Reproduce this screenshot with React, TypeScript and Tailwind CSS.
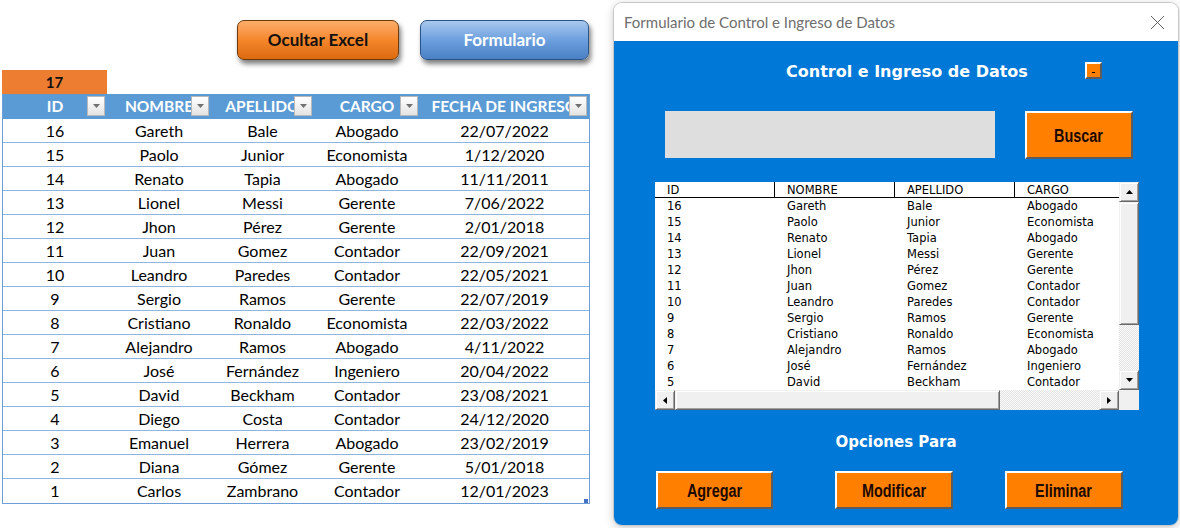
import React from 'react';

type Row = { id: number; nombre: string; apellido: string; cargo: string; fecha: string };

const rows: Row[] = [
  { id: 16, nombre: 'Gareth', apellido: 'Bale', cargo: 'Abogado', fecha: '22/07/2022' },
  { id: 15, nombre: 'Paolo', apellido: 'Junior', cargo: 'Economista', fecha: '1/12/2020' },
  { id: 14, nombre: 'Renato', apellido: 'Tapia', cargo: 'Abogado', fecha: '11/11/2011' },
  { id: 13, nombre: 'Lionel', apellido: 'Messi', cargo: 'Gerente', fecha: '7/06/2022' },
  { id: 12, nombre: 'Jhon', apellido: 'Pérez', cargo: 'Gerente', fecha: '2/01/2018' },
  { id: 11, nombre: 'Juan', apellido: 'Gomez', cargo: 'Contador', fecha: '22/09/2021' },
  { id: 10, nombre: 'Leandro', apellido: 'Paredes', cargo: 'Contador', fecha: '22/05/2021' },
  { id: 9, nombre: 'Sergio', apellido: 'Ramos', cargo: 'Gerente', fecha: '22/07/2019' },
  { id: 8, nombre: 'Cristiano', apellido: 'Ronaldo', cargo: 'Economista', fecha: '22/03/2022' },
  { id: 7, nombre: 'Alejandro', apellido: 'Ramos', cargo: 'Abogado', fecha: '4/11/2022' },
  { id: 6, nombre: 'José', apellido: 'Fernández', cargo: 'Ingeniero', fecha: '20/04/2022' },
  { id: 5, nombre: 'David', apellido: 'Beckham', cargo: 'Contador', fecha: '23/08/2021' },
  { id: 4, nombre: 'Diego', apellido: 'Costa', cargo: 'Contador', fecha: '24/12/2020' },
  { id: 3, nombre: 'Emanuel', apellido: 'Herrera', cargo: 'Abogado', fecha: '23/02/2019' },
  { id: 2, nombre: 'Diana', apellido: 'Gómez', cargo: 'Gerente', fecha: '5/01/2018' },
  { id: 1, nombre: 'Carlos', apellido: 'Zambrano', cargo: 'Contador', fecha: '12/01/2023' },
];

const headers = ['ID', 'NOMBRE', 'APELLIDO', 'CARGO', 'FECHA DE INGRESO'];

function FilterBtn() {
  return (
    <span className="absolute right-[2px] top-[2px] flex h-[20px] w-[18px] items-center justify-center border border-[#b9b9b9] bg-gradient-to-b from-white to-[#e4e4e4]">
      <svg width="7" height="4" viewBox="0 0 7 4">
        <path d="M0 0h7L3.5 4z" fill="#707070" />
      </svg>
    </span>
  );
}

// hoja de Excel con la tabla
function Sheet() {
  return (
    <div className="w-[614px] font-['Lato',sans-serif]">
      <div className="flex gap-[21px] pl-[237px] pt-[20px]">
        <button className="h-[40px] w-[162px] rounded-[7px] border-[1.5px] border-[#6e3a0c] bg-gradient-to-b from-[#fcae6a] via-[#f5862a] to-[#dc6a0e] text-[17px] font-bold text-[#111] shadow-[2px_4px_5px_rgba(0,0,0,0.5)]">
          Ocultar Excel
        </button>
        <button className="h-[40px] w-[169px] rounded-[7px] border-[1.5px] border-[#2b5486] bg-gradient-to-b from-[#a9c8ee] via-[#6c9fde] to-[#4a80c5] text-[17px] font-bold text-white shadow-[2px_4px_5px_rgba(0,0,0,0.5)]">
          Formulario
        </button>
      </div>

      <div className="ml-[2px] mt-[10px] flex h-[24px] w-[105px] items-center justify-center bg-[#ed7d31] text-[15px] font-bold text-[#111]">
        17
      </div>

      <div className="ml-[2px] w-[588px] border-x border-b border-[#6f9fd8]">
        <div className="grid h-[25px] grid-cols-[104px_104px_103px_106px_169px] bg-[#5b9bd5]">
          {headers.map((h) => (
            <div key={h} className="relative flex items-center justify-center overflow-hidden whitespace-nowrap text-[15.5px] font-bold text-white">
              {h}
              <FilterBtn />
            </div>
          ))}
        </div>
        {rows.map((r, i) => (
          <div
            key={r.id}
            className={`grid h-[24px] grid-cols-[104px_104px_103px_106px_169px] items-center text-center text-[16px] text-black ${i < rows.length - 1 ? 'border-b border-[#8fb4e0]' : ''}`}
          >
            <span>{r.id}</span>
            <span>{r.nombre}</span>
            <span>{r.apellido}</span>
            <span>{r.cargo}</span>
            <span>{r.fecha}</span>
          </div>
        ))}
      </div>
      <div className="ml-[584px] mt-[-5px] h-[4px] w-[4px] bg-[#4472c4]" />
    </div>
  );
}

const scrollBtn =
  'flex items-center justify-center border border-t-[#f0f0f0] border-l-[#f0f0f0] border-r-[#696969] border-b-[#696969] bg-[#f0f0f0] shadow-[inset_1px_1px_0_#fff,inset_-1px_-1px_0_#a0a0a0]';
const track = 'bg-[repeating-conic-gradient(#e3e3e3_0%_25%,#fafafa_0%_50%)] bg-[length:2px_2px]';
const orangeBtn =
  "flex items-center justify-center border-2 border-t-white border-l-white border-r-[#5c5c5c] border-b-[#5c5c5c] bg-[#ff8000] font-['Liberation_Sans',sans-serif] text-[18px] font-bold text-[#1c0900]";

function OrangeButton({ label, className }: { label: string; className: string }) {
  return (
    <button className={`${orangeBtn} ${className}`}>
      <span className="inline-block translate-y-[1px] scale-x-[0.8]">{label}</span>
    </button>
  );
}

function ListBox() {
  const cols = 'grid grid-cols-[120px_120px_120px_104px]';
  return (
    <div className="ml-[41px] mt-[23px] flex h-[228px] w-[484px] flex-col bg-white font-['DejaVu_Sans',sans-serif] text-[11.5px] text-black">
      <div className="flex h-[208px]">
        <div className="w-[464px] overflow-hidden">
          <div className={`${cols} h-[16px] border-b border-black leading-[16px]`}>
            <span className="border-r border-black pl-[12px]">ID</span>
            <span className="border-r border-black pl-[12px]">NOMBRE</span>
            <span className="border-r border-black pl-[12px]">APELLIDO</span>
            <span className="pl-[12px]">CARGO</span>
          </div>
          {rows.slice(0, 12).map((r) => (
            <div key={r.id} className={`${cols} h-[16px] leading-[17px]`}>
              <span className="pl-[12px]">{r.id}</span>
              <span className="pl-[12px]">{r.nombre}</span>
              <span className="pl-[12px]">{r.apellido}</span>
              <span className="whitespace-nowrap pl-[12px]">{r.cargo}</span>
            </div>
          ))}
        </div>
        <div className="flex w-[20px] flex-col">
          <div className={`${scrollBtn} h-[20px]`}>
            <svg width="7" height="4" viewBox="0 0 7 4"><path d="M0 4L3.5 0L7 4z" fill="#000" /></svg>
          </div>
          <div className={`${scrollBtn} h-[123px]`} />
          <div className={`${track} flex-1`} />
          <div className={`${scrollBtn} h-[20px]`}>
            <svg width="7" height="4" viewBox="0 0 7 4"><path d="M0 0h7L3.5 4z" fill="#000" /></svg>
          </div>
        </div>
      </div>
      <div className="flex h-[20px]">
        <div className="flex w-[464px]">
          <div className={`${scrollBtn} w-[20px]`}>
            <svg width="4" height="7" viewBox="0 0 4 7"><path d="M4 0v7L0 3.5z" fill="#000" /></svg>
          </div>
          <div className={`${scrollBtn} w-[325px]`} />
          <div className={`${track} flex-1`} />
          <div className={`${scrollBtn} w-[20px]`}>
            <svg width="4" height="7" viewBox="0 0 4 7"><path d="M0 0v7L4 3.5z" fill="#000" /></svg>
          </div>
        </div>
        <div className="w-[20px] bg-[#f0f0f0]" />
      </div>
    </div>
  );
}

function Formulario() {
  return (
    <div className="mt-[3px] flex h-[522px] w-[564px] flex-col rounded-lg shadow-[0_0_0_1px_#c8c8c8,0_2px_10px_rgba(0,0,0,0.25)]">
      <div className="flex h-[38px] items-center justify-between rounded-t-lg bg-white pl-[10px] pr-[13px]">
        <span className="font-['Lato',sans-serif] text-[15px] text-[#6e6e6e]">Formulario de Control e Ingreso de Datos</span>
        <svg width="15" height="15" viewBox="0 0 15 15">
          <path d="M1 1L14 14M14 1L1 14" stroke="#5f5f5f" strokeWidth="1" />
        </svg>
      </div>

      <div className="flex-1 rounded-b-lg bg-[#0078d7] pt-[14px]">
        <div className="flex h-[34px] items-center pl-[172px]">
          <span className="w-[241px] whitespace-nowrap font-['DejaVu_Sans',sans-serif] text-[16px] font-bold text-white">
            Control e Ingreso de Datos
          </span>
          <span className="ml-[58px] mt-[-3px] flex h-[17px] w-[17px] items-center justify-center border-2 border-t-white border-l-white border-r-[#5c5c5c] border-b-[#5c5c5c] bg-[#ff8000]">
            <span className="ml-[-1px] mt-[3px] h-[1px] w-[3px] bg-black" />
          </span>
        </div>

        <div className="mt-[22px] flex gap-[30px] pl-[51px]">
          <div className="h-[47px] w-[330px] bg-[#dedede]" />
          <OrangeButton label="Buscar" className="h-[48px] w-[108px]" />
        </div>

        <ListBox />

        <div className="mt-[22px] h-[20px] text-center font-['DejaVu_Sans',sans-serif] text-[15px] font-bold leading-[20px] text-white">
          Opciones Para
        </div>

        <div className="mt-[19px] flex pl-[42px]">
          <OrangeButton label="Agregar" className="h-[38px] w-[117px]" />
          <OrangeButton label="Modificar" className="ml-[62px] h-[38px] w-[118px]" />
          <OrangeButton label="Eliminar" className="ml-[52px] h-[38px] w-[118px]" />
        </div>
      </div>
    </div>
  );
}

export default function App() {
  return (
    <div className="flex h-[528px] w-[1180px] overflow-hidden bg-white">
      <Sheet />
      <Formulario />
    </div>
  );
}
